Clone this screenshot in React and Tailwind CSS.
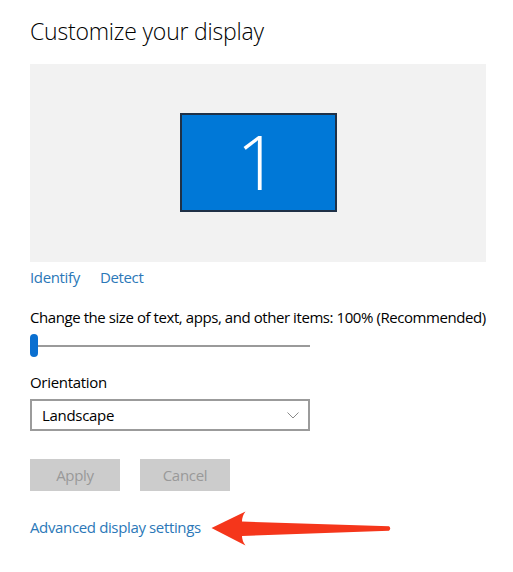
const font = { fontFamily: '"Open Sans", "Noto Sans", sans-serif' };

export default function App() {
  return (
    <div className="relative w-[513px] h-[572px] bg-white text-black pl-[30px] pt-[14px]" style={font}>
      {/* Title */}
      <h1 className="text-[23px] leading-[34px] font-light tracking-[-0.2px]">Customize your display</h1>

      {/* Display preview */}
      <div className="mt-[16px] w-[456px] h-[198px] bg-[#f2f2f2] flex items-start justify-center pt-[49px]">
        <div className="w-[157px] h-[99px] bg-[#0078d7] border-2 border-[#1f3147] flex items-center justify-center">
          <span className="text-white text-[76px] font-light leading-none -mt-[4px]">1</span>
        </div>
      </div>

      {/* Identify / Detect */}
      <div className="flex gap-[20px] mt-[5px] text-[15px] leading-[20px] text-[#2b78b8] tracking-[-0.35px]">
        <span>Identify</span>
        <span>Detect</span>
      </div>

      {/* Scale */}
      <p className="mt-[20px] text-[15px] leading-[20px] tracking-[-0.43px]">
        Change the size of text, apps, and other items: 100% (Recommended)
      </p>
      <div className="relative mt-[7px] w-[280px] h-[23px] flex items-center">
        <div className="w-full h-[2px] bg-[#9a9a9a]" />
        <div className="absolute left-0 top-0 w-[8px] h-[23px] rounded-full bg-[#0a6fd0]" />
      </div>

      {/* Orientation */}
      <p className="mt-[15px] text-[15px] leading-[20px] tracking-[-0.3px]">Orientation</p>
      <div className="mt-[7px] w-[280px] h-[32px] border-2 border-[#9b9b9b] flex items-center justify-between pl-[10px] pr-[9px]">
        <span className="text-[15px] leading-[20px] tracking-[-0.3px]">Landscape</span>
        <svg width="12" height="7" viewBox="0 0 12 7" className="mt-[1px]">
          <polyline points="0.5,0.5 6,6 11.5,0.5" fill="none" stroke="#8a8a8a" strokeWidth="1" />
        </svg>
      </div>

      {/* Buttons */}
      <div className="flex gap-[20px] mt-[28px]">
        <div className="w-[90px] h-[32px] bg-[#cccccc] text-[#999999] text-[15px] tracking-[-0.3px] flex items-center justify-center">Apply</div>
        <div className="w-[90px] h-[32px] bg-[#cccccc] text-[#999999] text-[15px] tracking-[-0.3px] flex items-center justify-center">Cancel</div>
      </div>

      {/* Advanced link */}
      <p className="mt-[26px] text-[15px] leading-[20px] text-[#2b78b8] tracking-[-0.36px]">Advanced display settings</p>

      {/* Annotation arrow */}
      <svg className="absolute left-0 top-0 pointer-events-none" width="513" height="572" viewBox="0 0 513 572">
        <path
          d="M211.5 528 L245.5 511.5 Q242 516 242 521.5 L389 526.3 Q391.5 528.5 389 530.7 L242 536 Q242 541 245.5 545.5 Z"
          fill="#f5361b"
        />
      </svg>
    </div>
  );
}
